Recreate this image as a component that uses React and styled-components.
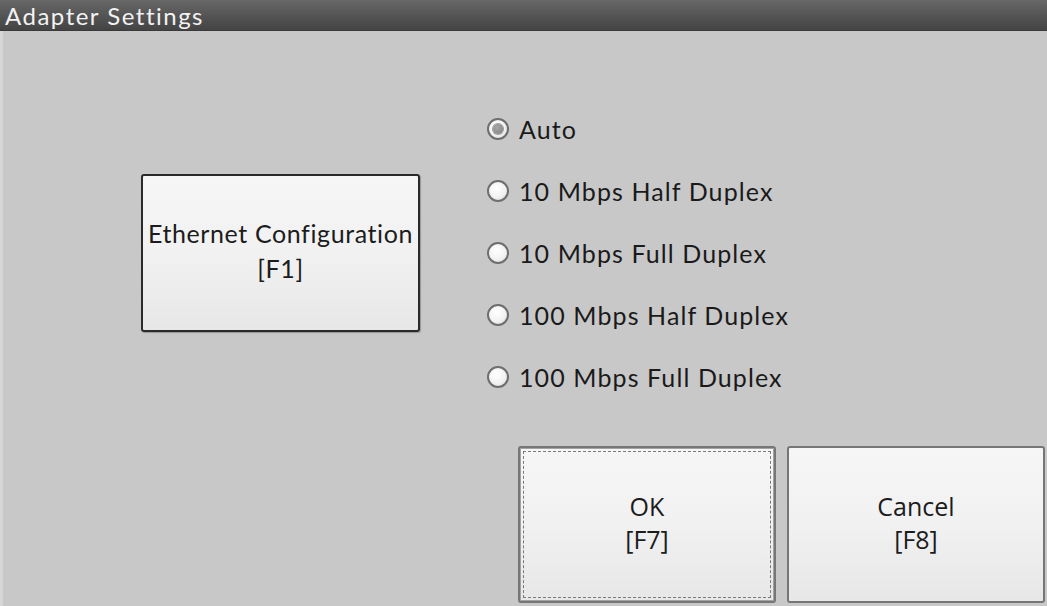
import React, { useState } from "react"
import styled, { createGlobalStyle } from "styled-components"

const GlobalStyle = createGlobalStyle`
  html, body {
    margin: 0;
    padding: 0;
    background: #c8c8c8;
  }
  body {
    font-family: "Lato", "Open Sans", sans-serif;
  }
`

const Window = styled.div`
  width: 1047px;
  height: 606px;
  display: flex;
  flex-direction: column;
  background: #c8c8c8;
  overflow: hidden;
`

const TitleBar = styled.div`
  height: 31px;
  flex: 0 0 31px;
  display: flex;
  align-items: center;
  padding-left: 5px;
  background: linear-gradient(#686868, #535353 55%, #444);
  border-bottom: 1px solid #3a3a3a;
  color: #f2f2f2;
  font-size: 24px;
  letter-spacing: 1.5px;
  box-sizing: border-box;
`

const Body = styled.div`
  flex: 1;
  display: flex;
  border-left: 3px solid #d6d6d6;
`

const LeftColumn = styled.div`
  width: 484px;
  padding: 143px 0 0 138px;
  box-sizing: border-box;
`

const RightColumn = styled.div`
  display: flex;
  flex-direction: column;
  padding-top: 67px;
`

const Button = styled.button`
  width: ${(p) => p.$w}px;
  height: ${(p) => p.$h}px;
  display: flex;
  flex-direction: column;
  align-items: center;
  justify-content: center;
  gap: ${(p) => p.$gap || 0}px;
  background: linear-gradient(#f6f6f6, #f1f1f1 50%, #e7e7e7);
  border: 2px solid ${(p) => (p.$dark ? "#2a2a2a" : "#767676")};
  border-radius: 3px;
  color: #1c1c1c;
  font-family: ${(p) => p.$font};
  font-size: ${(p) => p.$size}px;
  letter-spacing: ${(p) => p.$spacing || 0}px;
  line-height: 1.3;
  padding: 0 0 ${(p) => p.$lift || 0}px;
  cursor: pointer;
  box-shadow: ${(p) =>
    p.$focused
      ? "inset 0 0 0 1px #a2a2a2"
      : p.$dark
      ? "1px 1px 1px rgba(0,0,0,0.25)"
      : "none"};
  ${(p) => p.$focused && "outline: 1px dashed #7a7a7a; outline-offset: -6px;"}
`

const RadioList = styled.div`
  display: flex;
  flex-direction: column;
`

const RadioRow = styled.label`
  height: 62px;
  display: flex;
  align-items: center;
  gap: 10px;
  font-size: 25px;
  letter-spacing: 1.1px;
  color: #1a1a1a;
  cursor: pointer;
`

const Circle = styled.span`
  width: 22px;
  height: 22px;
  flex: 0 0 22px;
  border-radius: 50%;
  box-sizing: border-box;
  border: 2px solid #6e6e6e;
  background: radial-gradient(circle at 40% 35%, #ffffff, #f2f2f2 55%, #d8d8d8);
  display: flex;
  align-items: center;
  justify-content: center;

  &::after {
    content: "";
    width: 10px;
    height: 10px;
    border-radius: 50%;
    background: ${(p) => (p.$checked ? "radial-gradient(circle at 40% 35%, #a8a8a8, #7c7c7c)" : "transparent")};
    box-shadow: ${(p) => (p.$checked ? "0 0 0 1px #9a9a9a" : "none")};
  }
`

const ButtonRow = styled.div`
  display: flex;
  gap: 11px;
  margin: 38px 0 0 31px;
`

const options = [
  "Auto",
  "10 Mbps Half Duplex",
  "10 Mbps Full Duplex",
  "100 Mbps Half Duplex",
  "100 Mbps Full Duplex",
]

const App = () => {
  const [speed, setSpeed] = useState(0)

  return (
    <>
      <GlobalStyle />
      <Window>
        <TitleBar>Adapter Settings</TitleBar>
        <Body>
          <LeftColumn>
            <Button
              $w={279}
              $h={158}
              $dark
              $font={'"Lato", sans-serif'}
              $size={25}
              $spacing={0.6}
              $gap={3}
              $lift={5}
            >
              <span>Ethernet Configuration</span>
              <span>[F1]</span>
            </Button>
          </LeftColumn>
          <RightColumn>
            <RadioList>
              {options.map((label, i) => (
                <RadioRow key={label} onClick={() => setSpeed(i)}>
                  <Circle $checked={speed === i} />
                  {label}
                </RadioRow>
              ))}
            </RadioList>
            <ButtonRow>
              <Button $w={258} $h={157} $focused $font={'"Open Sans", sans-serif'} $size={25} $lift={4}>
                <span>OK</span>
                <span>[F7]</span>
              </Button>
              <Button $w={258} $h={157} $font={'"Open Sans", sans-serif'} $size={25} $lift={4}>
                <span>Cancel</span>
                <span>[F8]</span>
              </Button>
            </ButtonRow>
          </RightColumn>
        </Body>
      </Window>
    </>
  )
}

export default App
